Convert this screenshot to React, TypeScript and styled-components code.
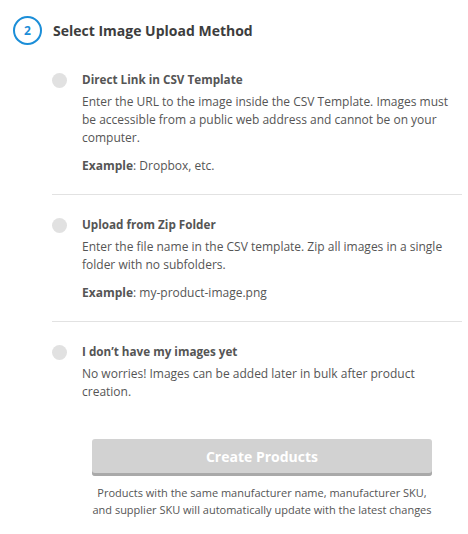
import React from "react";
import styled, { createGlobalStyle } from "styled-components";

const Global = createGlobalStyle`
  html, body { margin: 0; padding: 0; background: #fff; }
  body { font-family: "Open Sans", "Liberation Sans", sans-serif; color: #555; }
`;

const Page = styled.div`
  width: 468px;
  height: 534px;
  box-sizing: border-box;
  padding: 16px 6px 0 13px;
  display: flex;
  flex-direction: column;
`;

const Header = styled.div`
  display: flex;
  align-items: center;
  gap: 11px;
`;

const StepBadge = styled.div`
  width: 29px;
  height: 29px;
  box-sizing: border-box;
  border: 2px solid #1b8ed8;
  border-radius: 50%;
  color: #1b8ed8;
  font-weight: 700;
  font-size: 12px;
  display: flex;
  align-items: center;
  justify-content: center;
`;

const Title = styled.h2`
  margin: 0;
  font-size: 14px;
  font-weight: 700;
  color: #3d3d3d;
`;

const Options = styled.div`
  margin: 25px 0 0 39px;
  display: flex;
  flex-direction: column;
`;

const Option = styled.div<{ $last?: boolean }>`
  display: flex;
  gap: 15px;
  padding: 0 0 ${(p) => (p.$last ? "0" : "19px")};
  border-bottom: ${(p) => (p.$last ? "none" : "1px solid #e2e2e2")};
  & + & { padding-top: 20px; }
`;

const Radio = styled.span`
  flex: none;
  width: 15px;
  height: 15px;
  margin-top: 3px;
  border-radius: 50%;
  background: #e1e1e1;
`;

const Body = styled.div`
  display: flex;
  flex-direction: column;
`;

const OptionTitle = styled.div`
  font-size: 11.7px;
  font-weight: 700;
  color: #555;
  line-height: 18px;
`;

const Desc = styled.p`
  margin: 5px 0 0;
  font-size: 12px;
  line-height: 18px;
  color: #555;
`;

const Example = styled.p`
  margin: 10px 0 0;
  font-size: 12px;
  line-height: 18px;
  color: #555;
  b { font-weight: 700; }
`;

const Footer = styled.div`
  margin: 38px 0 0 79px;
  width: 340px;
  display: flex;
  flex-direction: column;
  align-items: center;
`;

const CreateButton = styled.button`
  width: 340px;
  height: 37px;
  border: none;
  border-radius: 3px;
  background: #d2d2d2;
  box-shadow: inset 0 -3px 0 #a9a9a9;
  color: #fff;
  font-family: inherit;
  font-size: 14px;
  font-weight: 700;
  padding: 0 0 3px;
  cursor: default;
`;

const Note = styled.p`
  margin: 8px 0 0;
  font-size: 11px;
  line-height: 17px;
  text-align: center;
  color: #555;
  white-space: nowrap;
`;

const options = [
  {
    title: "Direct Link in CSV Template",
    desc: "Enter the URL to the image inside the CSV Template. Images must be accessible from a public web address and cannot be on your computer.",
    example: "Dropbox, etc.",
  },
  {
    title: "Upload from Zip Folder",
    desc: "Enter the file name in the CSV template. Zip all images in a single folder with no subfolders.",
    example: "my-product-image.png",
  },
  {
    title: "I don’t have my images yet",
    desc: "No worries! Images can be added later in bulk after product creation.",
  },
];

export default function App() {
  return (
    <>
      <Global />
      <Page>
        <Header>
          <StepBadge>2</StepBadge>
          <Title>Select Image Upload Method</Title>
        </Header>
        <Options>
          {options.map((o, i) => (
            <Option key={o.title} $last={i === options.length - 1}>
              <Radio />
              <Body>
                <OptionTitle>{o.title}</OptionTitle>
                <Desc>{o.desc}</Desc>
                {o.example && (
                  <Example>
                    <b>Example</b>: {o.example}
                  </Example>
                )}
              </Body>
            </Option>
          ))}
        </Options>
        <Footer>
          <CreateButton>Create Products</CreateButton>
          <Note>
            Products with the same manufacturer name, manufacturer SKU,
            <br />
            and supplier SKU will automatically update with the latest changes
          </Note>
        </Footer>
      </Page>
    </>
  );
}
